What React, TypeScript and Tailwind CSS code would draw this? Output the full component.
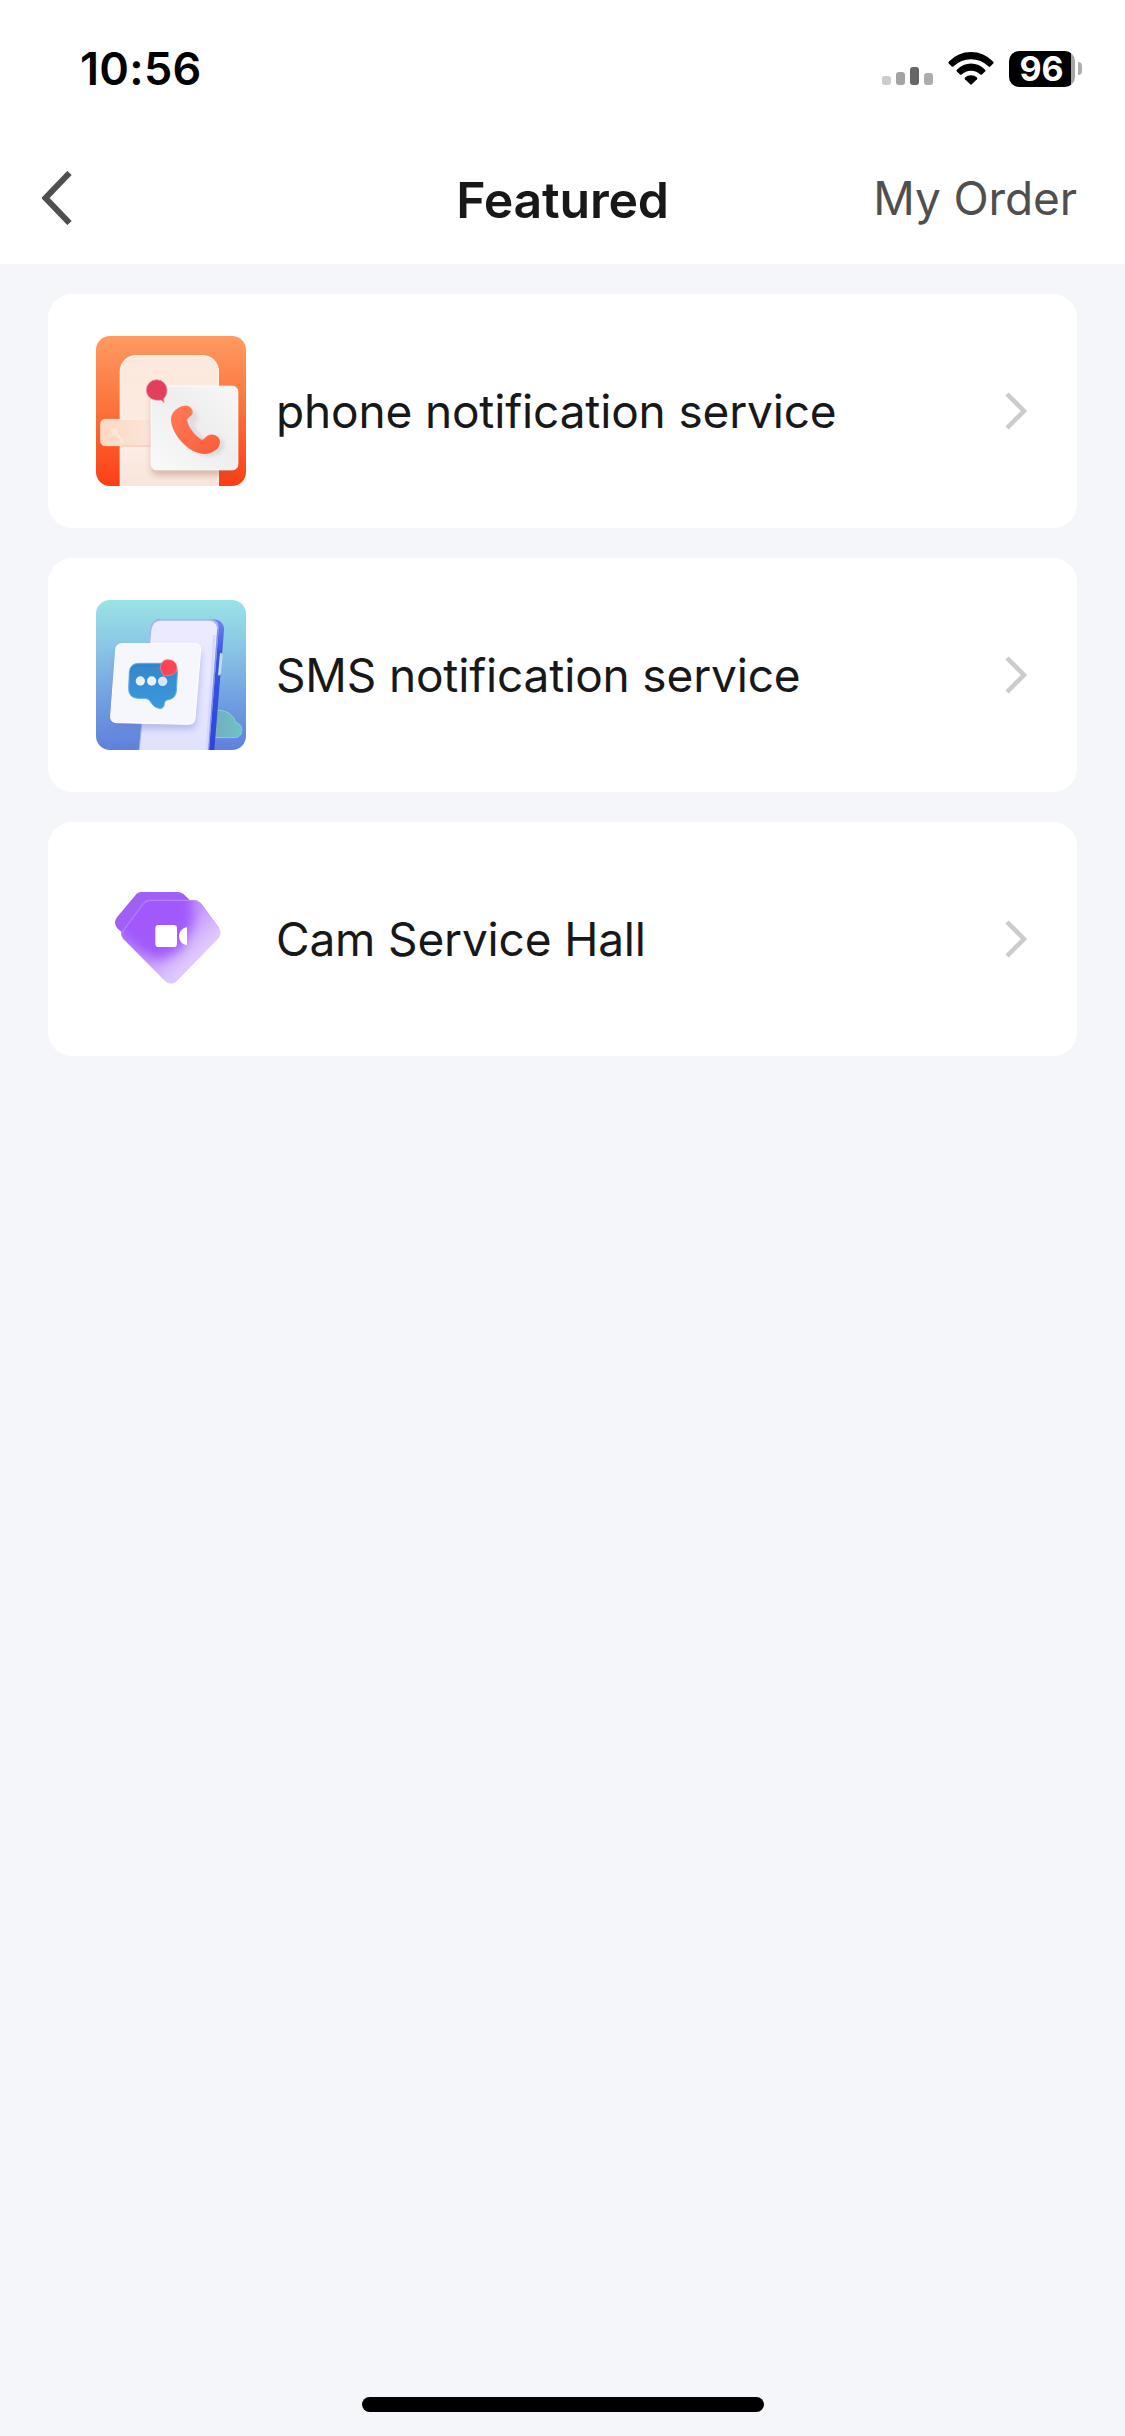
import React from 'react';

const PhoneArt = () => (
    <svg viewBox="48 48 450 450" className="w-[150px] h-[150px] shrink-0 rounded-[14px]">
        <defs>
            <linearGradient id="phoneBg" x1="0" y1="0" x2="0" y2="1">
                <stop offset="0" stopColor="#ff9b61" />
                <stop offset="0.5" stopColor="#fb7139" />
                <stop offset="1" stopColor="#fd3d16" />
            </linearGradient>
            <linearGradient id="phoneBody" x1="0" y1="0" x2="0" y2="1">
                <stop offset="0" stopColor="#fde8dc" />
                <stop offset="0.7" stopColor="#fbece4" />
                <stop offset="1" stopColor="#fae3da" />
            </linearGradient>
            <linearGradient id="phoneStrap" x1="0" y1="0" x2="1" y2="0">
                <stop offset="0" stopColor="#fdd9c4" />
                <stop offset="0.5" stopColor="#fbe0d0" />
                <stop offset="1" stopColor="#fbe8de" />
            </linearGradient>
            <linearGradient id="phoneCard" x1="0" y1="1" x2="1" y2="0">
                <stop offset="0" stopColor="#fafafa" />
                <stop offset="0.55" stopColor="#eeeeef" />
                <stop offset="1" stopColor="#f8f8f8" />
            </linearGradient>
            <linearGradient id="handset" x1="0" y1="0" x2="1" y2="1">
                <stop offset="0" stopColor="#ff7b54" />
                <stop offset="1" stopColor="#fb5d3c" />
            </linearGradient>
            <filter id="phoneBlur" x="-20%" y="-20%" width="140%" height="140%">
                <feGaussianBlur stdDeviation="9" />
            </filter>
            <filter id="handsetBlur" x="-20%" y="-20%" width="140%" height="140%">
                <feGaussianBlur stdDeviation="5" />
            </filter>
        </defs>
        <rect x="48" y="48" width="450" height="450" fill="url(#phoneBg)" />
        <path d="M121 510V154a47 47 0 0 1 47-47h200a47 47 0 0 1 47 47v356z" fill="url(#phoneBody)" stroke="#fff1e6" strokeWidth="4" />
        <rect x="62" y="298" width="180" height="79" rx="13" fill="url(#phoneStrap)" stroke="#fff0e2" strokeWidth="2" />
        <path d="M125 378h90" stroke="#f0a488" strokeWidth="2" />
        <circle cx="104" cy="335" r="14" fill="#fde6d6" stroke="#fbd9c4" strokeWidth="4" />
        <path d="M114 347l13 16" stroke="#fdebde" strokeWidth="8" strokeLinecap="round" />
        <rect x="214" y="222" width="252" height="244" rx="18" fill="#8f5a4c" opacity="0.33" filter="url(#phoneBlur)" />
        <rect x="213.500" y="198.500" width="260" height="251" rx="16" fill="url(#phoneCard)" stroke="#fff" strokeWidth="3" />
        <path d="M252 248c-3-4-5-6-9-8-25 5-44-10-44-30a31 31 0 0 1 62 0c0 12-4 20-10 26z" fill="#e23f5d" stroke="#f2899a" strokeWidth="2" />
        <path d="M314 258c12-1 26 13 26 28 0 9-12 14-9 22 9 20 23 37 40 46 8 5 13-9 24-10 14-2 25 8 25 21 0 20-18 38-50 38-48-3-96-62-96-105 0-21 20-39 40-40z" transform="translate(14 8)" fill="#a99" opacity="0.2" filter="url(#handsetBlur)" />
        <path d="M314 257c12-2 24 9 24 20 0 14-22 17-17 31 8 21 25 42 42 51 9 4 14-14 28-15 14-2 28 7 29 21 0 18-17 36-48 37-49-2-99-62-99-104 0-21 19-38 41-41z" fill="url(#handset)" />
        <path d="M322 303c-3 10 18 43 40 56" stroke="#f24e2c" strokeWidth="4" fill="none" opacity="0.5" />
        <path d="M336 271c5 16-19 21-15 32M363 358c12 2 14-11 27-13" stroke="#ff9470" strokeWidth="3" fill="none" opacity="0.7" />
    </svg>
);

const SmsArt = () => (
    <svg viewBox="48 45 450 450" className="w-[150px] h-[150px] shrink-0 rounded-[14px]">
        <defs>
            <linearGradient id="smsBg" x1="0" y1="0" x2="0" y2="1">
                <stop offset="0" stopColor="#9ae3e5" />
                <stop offset="0.3" stopColor="#8bc7e6" />
                <stop offset="0.7" stopColor="#6f9ce1" />
                <stop offset="1" stopColor="#5f80dc" />
            </linearGradient>
            <linearGradient id="smsEdge" x1="0" y1="0" x2="0" y2="1">
                <stop offset="0" stopColor="#6d87ed" />
                <stop offset="0.25" stopColor="#3f57dc" />
                <stop offset="1" stopColor="#2b46d8" />
            </linearGradient>
            <linearGradient id="smsScreen" x1="0" y1="0" x2="0" y2="1">
                <stop offset="0" stopColor="#ecebff" />
                <stop offset="1" stopColor="#e0e2fc" />
            </linearGradient>
            <linearGradient id="smsCloud" x1="0" y1="0" x2="1" y2="0">
                <stop offset="0" stopColor="#74a9bd" />
                <stop offset="1" stopColor="#6fc0c9" />
            </linearGradient>
            <linearGradient id="smsBubble" x1="0" y1="0" x2="0" y2="1">
                <stop offset="0" stopColor="#3487cb" />
                <stop offset="1" stopColor="#3c99dc" />
            </linearGradient>
            <filter id="smsBlur" x="-20%" y="-20%" width="140%" height="140%">
                <feGaussianBlur stdDeviation="9" />
            </filter>
        </defs>
        <rect x="48" y="45" width="450" height="450" fill="url(#smsBg)" />
        <path d="M380 458V390c12-12 24-16 40-14 26 2 42 18 47 36 14 4 19 14 18 27-1 12-10 19-23 19z" fill="url(#smsCloud)" stroke="#88d2cf" strokeWidth="3" />
        <path d="M230 103h170c20 0 34 14 32 34l-29 358H182z" fill="url(#smsEdge)" />
        <path d="M420 204q8-2 8 7l-5 55q-1 6-9 5z" fill="#c4dcfb" />
        <path d="M241 102h146c20 0 31 10 29 31l-29 365H176l34-363c2-22 12-33 31-33z" fill="#a8b3f8" />
        <path d="M242 107h142c18 0 28 10 27 28l-27 363H179l35-361c2-20 12-30 28-30z" fill="url(#smsScreen)" />
        <path d="M414 132l-29 363" stroke="#8192ef" strokeWidth="4" />
        <path d="M403 150l-22 345" stroke="#cfd4fc" strokeWidth="7" opacity="0.8" />
        <path d="M125 195h224q18 0 16 18l-16 200q-2 20-22 20H114q-18 0-16-18l10-203q1-17 17-17z" fill="#6d78c9" opacity="0.36" filter="url(#smsBlur)" />
        <path d="M126 176h218q20 0 18 21l-17 203q-1 18-20 18l-215-5q-20-1-18-20l15-198q1-19 19-19z" fill="#f6f6fd" stroke="#fff" strokeWidth="3" />
        <path d="M178 235h85q30 0 29 29l-3 54q-1 23-28 27-7 1-8 10-1 18-16 15-13-1-22-15-8-15-20-15h-22q-27-2-27-29l2-49q1-27 30-27z" fill="url(#smsBubble)" stroke="#61aae2" strokeWidth="3" />
        <path d="M153 260q4-17 22-17h75" fill="none" stroke="#2c79ba" strokeWidth="3" opacity="0.6" />
        <circle cx="181" cy="288" r="14" fill="#e8f0fa" />
        <circle cx="215" cy="288" r="14" fill="#e8f0fa" />
        <circle cx="248" cy="289" r="14" fill="#d9e4f5" />
        <path d="M249 276c2-6 1-8-3-13a24 24 0 0 1 21-39 24 24 0 0 1 24 23c0 17-13 24-27 24-6 0-10 1-15 5z" fill="#f94556" stroke="#ff8d8f" strokeWidth="2" />
    </svg>
);

const CamArt = () => (
    <svg viewBox="48 42 450 450" className="w-[150px] h-[150px] shrink-0">
        <defs>
            <linearGradient id="camBack" x1="0" y1="0" x2="1" y2="1">
                <stop offset="0" stopColor="#9c62ee" />
                <stop offset="1" stopColor="#a65cff" />
            </linearGradient>
            <linearGradient id="camFront" gradientUnits="userSpaceOnUse" x1="215" y1="195" x2="340" y2="325">
                <stop offset="0" stopColor="#b984fc" />
                <stop offset="0.5" stopColor="#c699fc" />
                <stop offset="0.8" stopColor="#d5b7fd" />
                <stop offset="1" stopColor="#dfc8ff" />
            </linearGradient>
            <filter id="camBlur" x="-30%" y="-30%" width="160%" height="160%">
                <feGaussianBlur stdDeviation="17" />
            </filter>
            <clipPath id="camClip">
                <path d="M208 150h131q14 0 24 10l53 73q13 17-2 33L291 393q-18 17-36 0L130 267q-12-14-2-27l56-77q10-13 24-13z" />
            </clipPath>
        </defs>
        <path d="M184 126h108q14 0 24 11l14 14-205 95-12-10q-15-19-1-36l53-63q8-11 19-11z" fill="url(#camBack)" />
        <g clipPath="url(#camClip)">
            <rect x="120" y="145" width="310" height="265" fill="url(#camFront)" />
            {/* saturated core fading out towards the lower edges */}
            <path d="M100 110h235l5 105-40 85-60 30-60-25-80-75z" fill="#a158fd" filter="url(#camBlur)" />
        </g>
        <path d="M125 249l59-80q12-18 24-18h131q14 0 24 10l53 73" fill="none" stroke="#c797ff" strokeWidth="3" opacity="0.8" />
        <rect x="226" y="225" width="65" height="66" rx="10" fill="#fff" />
        <path d="M318 232q3-1 3 3v47q0 4-3 3-21-6-21-27 0-18 21-26z" fill="#fff" />
    </svg>
);

const services = [
    { label: 'phone notification service', art: <PhoneArt /> },
    { label: 'SMS notification service', art: <SmsArt /> },
    { label: 'Cam Service Hall', art: <CamArt /> },
];

function StatusBar() {
    return (
        <div className="h-[132px] flex items-start justify-between pl-20 pr-[43px] text-black">
            <span className="mt-[42px] text-[45px] leading-[54px] font-semibold tracking-[0.3px]">10:56</span>
            <div className="mt-[51px] h-9 flex items-start">
                <div className="h-[34px] flex items-end gap-[5px] mr-[15px]">
                    <div className="w-[9px] h-[9px] rounded-[3px] bg-[#cccccc]" />
                    <div className="w-[9px] h-[13px] rounded-[3px] bg-[#a3a3a3]" />
                    <div className="w-[9px] h-[18px] rounded-[3px] bg-[#666666]" />
                    <div className="w-[9px] h-3 rounded-[3px] bg-[#adadad]" />
                </div>
                <svg viewBox="0 0 46 34" className="w-[46px] h-[34px] mr-[15px]">
                    <path d="M1 10.500Q-.2 11.600 1 12.800L3.700 15.500Q4.500 16.200 5.300 15.500Q13 8.300 23 8.300T40.700 15.500Q41.500 16.200 42.300 15.500L45 12.800Q46.200 11.600 45 10.500Q36 1 23 1T1 10.500z" />
                    <path d="M8.900 18.700Q7.900 19.600 8.900 20.500L12 23.500Q12.800 24.200 13.600 23.500Q17.500 19.700 23 19.700T32.400 23.500Q33.200 24.200 34 23.500L37.100 20.500Q38.100 19.600 37.100 18.700Q31 12.600 23 12.600T8.900 18.700z" />
                    <path d="M17 26.500Q16.200 27.400 17 28.200L22.200 33.300Q23 34 23.800 33.300L29 28.200Q29.800 27.400 29 26.500Q26.500 24.200 23 24.200T17 26.500z" />
                </svg>
                <div className="w-[66px] h-9 rounded-[10px] bg-[linear-gradient(to_right,#000_62px,#a6a6a6_62px)] text-white text-[34px] leading-9 font-bold text-center pr-px">96</div>
                <div className="mt-[11px] ml-[3px] w-1 h-[13px] rounded-r-full bg-[#adadad]" />
            </div>
        </div>
    );
}

export default function App() {
    return (
        <div className="w-[1125px] h-[2436px] flex flex-col overflow-hidden bg-[#f5f6fa] font-['Inter',sans-serif] antialiased">
            <header className="h-[264px] shrink-0 bg-white">
                <StatusBar />
                <div className="h-[132px] grid grid-cols-3 items-center pl-[42px] pr-12">
                    <svg viewBox="0 0 30 54" className="w-[30px] h-[54px] text-[#4f4f4f]">
                        <path d="M27.500 2L3.500 27L27.500 52" fill="none" stroke="currentColor" strokeWidth="6" />
                    </svg>
                    <h1 className="pt-[3px] pl-1.5 text-[50px] leading-[60px] font-semibold tracking-[-0.2px] text-[#181818] text-center">Featured</h1>
                    <span className="text-[46px] leading-[60px] tracking-[-0.1px] text-[#4f4f4f] text-right whitespace-nowrap">My Order</span>
                </div>
            </header>

            <main className="flex-1 px-12 pt-[30px] space-y-[30px]">
                {services.map(service => (
                    <div key={service.label} className="h-[234px] flex items-center pl-12 pr-[49px] rounded-3xl bg-white">
                        {service.art}
                        <span className="ml-[30px] flex-1 text-[46px] leading-[60px] tracking-[-0.16px] text-[#181818]">{service.label}</span>
                        <svg viewBox="0 0 24 40" className="w-6 h-10">
                            <path d="M3 3L20 20L3 37" fill="none" stroke="#cccccc" strokeWidth="4.500" />
                        </svg>
                    </div>
                ))}
            </main>

            <div className="w-[402px] h-[15px] mb-6 mx-auto rounded-full bg-black" />
        </div>
    );
}
